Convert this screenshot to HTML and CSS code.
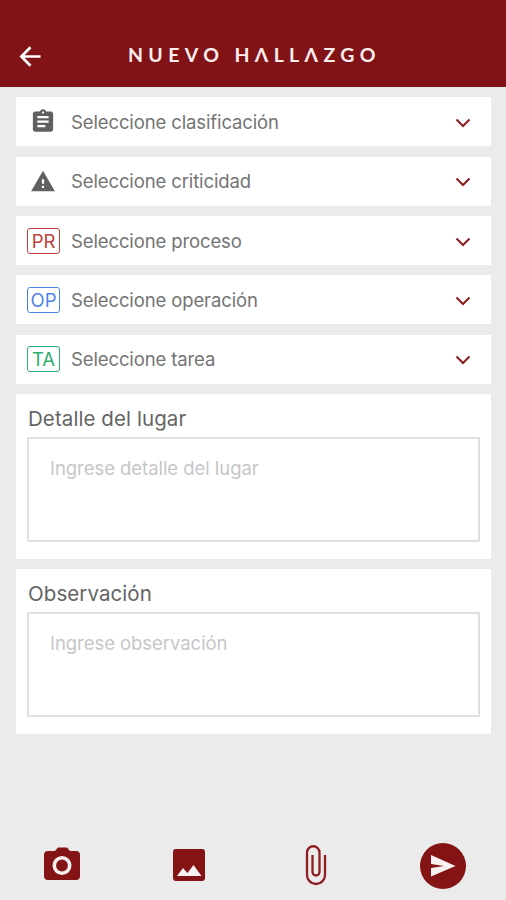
FILE: index.html
```html
<!DOCTYPE html>
<html lang="es">
<head>
<meta charset="utf-8">
<meta name="viewport" content="width=device-width, initial-scale=1">
<title>Nuevo hallazgo</title>
<link rel="stylesheet" href="styles.css">
</head>
<body>
<header class="bar">
  <svg class="back" viewBox="0 0 24 24"><path d="M22.500 12H3M12 2.300 2.500 12l9.500 9.700"/></svg>
  <h1 class="title">NUEVO HΛLLΛZGO</h1>
</header>
<main class="form">
  <div class="row">
    <span class="lead"><svg class="icon" viewBox="0 0 24 24"><path d="M19 3h-4.180C14.400 1.840 13.300 1 12 1s-2.400.84-2.820 2H5c-1.100 0-2 .9-2 2v14c0 1.100.9 2 2 2h14c1.100 0 2-.9 2-2V5c0-1.100-.9-2-2-2zm-7 0c.55 0 1 .45 1 1s-.45 1-1 1-1-.45-1-1 .45-1 1-1zm2 14H7v-2h7v2zm3-4H7v-2h10v2zm0-4H7V7h10v2z"/></svg></span>
    <span class="label">Seleccione clasificación</span>
    <svg class="chev" viewBox="0 0 16 10"><path d="M1.500 1.500 8 8l6.500-6.500"/></svg>
  </div>
  <div class="row">
    <span class="lead"><svg class="icon warn" viewBox="0 0 24 24"><path d="M1 21h22L12 2 1 21zm12-3h-2v-2h2v2zm0-4h-2v-4h2v4z"/></svg></span>
    <span class="label">Seleccione criticidad</span>
    <svg class="chev" viewBox="0 0 16 10"><path d="M1.500 1.500 8 8l6.500-6.500"/></svg>
  </div>
  <div class="row">
    <span class="lead"><span class="tag pr">PR</span></span>
    <span class="label">Seleccione proceso</span>
    <svg class="chev" viewBox="0 0 16 10"><path d="M1.500 1.500 8 8l6.500-6.500"/></svg>
  </div>
  <div class="row">
    <span class="lead"><span class="tag op">OP</span></span>
    <span class="label">Seleccione operación</span>
    <svg class="chev" viewBox="0 0 16 10"><path d="M1.500 1.500 8 8l6.500-6.500"/></svg>
  </div>
  <div class="row">
    <span class="lead"><span class="tag ta">TA</span></span>
    <span class="label">Seleccione tarea</span>
    <svg class="chev" viewBox="0 0 16 10"><path d="M1.500 1.500 8 8l6.500-6.500"/></svg>
  </div>
  <section class="card">
    <h2 class="heading">Detalle del lugar</h2>
    <div class="field">Ingrese detalle del lugar</div>
  </section>
  <section class="card">
    <h2 class="heading">Observación</h2>
    <div class="field">Ingrese observación</div>
  </section>
</main>
<footer class="actions">
  <div class="action"><svg class="camera" viewBox="0 0 36 33"><path class="fill" d="M4 4h7l3-3.500h9L26 4h6q4 0 4 4v21q0 4-4 4H4q-4 0-4-4V8q0-4 4-4z"/><circle class="lens" cx="18" cy="18.500" r="7.700"/></svg></div>
  <div class="action"><svg class="image" viewBox="0 0 32 32"><rect class="fill" width="32" height="32" rx="3"/><path class="cut" d="M4 27 10 19l4.500 5L20.500 16 28.500 27z"/></svg></div>
  <div class="action"><svg class="clip" viewBox="0 0 22 42"><path d="M7.500 11v17a3.500 3.500 0 0 0 7 0V8.500a6.250 6.250 0 0 0-12.500 0V31a9 9 0 0 0 18 0V11"/></svg></div>
  <div class="action"><svg class="send" viewBox="0 0 46 46"><circle class="fill" cx="23" cy="23" r="23"/><path class="cut" d="M11 12 35.500 23 11 33.500V25l13-2-13-2z"/></svg></div>
</footer>
</body>
</html>
```

FILE: styles.css
```css
* { box-sizing: border-box; }

body {
  margin: 0;
  height: 900px;
  display: flex;
  flex-direction: column;
  background: #ebebeb;
  font-family: Inter, "Liberation Sans", sans-serif;
}

.bar {
  height: 87px;
  display: flex;
  align-items: flex-end;
  padding: 0 0 19px 19px;
  background: #811316;
  color: #fbeeee;
}

.back {
  width: 23px;
  height: 23px;
  fill: none;
  stroke: #fff;
  stroke-width: 2.800;
}

.title {
  margin: 0 0 1px 86px;
  font: 700 19.5px/24px Lato, sans-serif;
  letter-spacing: 5.35px;
  white-space: nowrap;
}

.form {
  display: flex;
  flex-direction: column;
  gap: 10.4px;
  padding: 10.3px 15px 0 16px;
}

.row {
  height: 49px;
  display: flex;
  align-items: center;
  padding: 0 20px 0 11px;
  background: #fff;
}

.lead {
  width: 33px;
  margin-right: 11px;
  display: flex;
  justify-content: center;
}

.icon {
  width: 28px;
  height: 27px;
  margin-right: 1px;
  fill: #606060;
}

.warn { width: 26px; }

.tag {
  width: 33px;
  height: 26px;
  border: 1.500px solid;
  border-radius: 3px;
  font-size: 18.5px;
  line-height: 24px;
  text-align: center;
}

.pr { color: #c0403b; }
.op { color: #4f82e6; }
.ta { color: #2fac70; }

.label {
  flex: 1;
  color: #747474;
  font-size: 18.5px;
  letter-spacing: -0.12px;
  white-space: nowrap;
}

.chev {
  width: 16px;
  height: 10px;
  margin-top: 2px;
  fill: none;
  stroke: #8c1d22;
  stroke-width: 2;
}

.card {
  height: 164.5px;
  padding: 12px 11px 0;
  background: #fff;
}

.heading {
  margin: 0 0 6px 1px;
  color: #646464;
  font-size: 20.5px;
  font-weight: 400;
  letter-spacing: 0.08px;
  line-height: 25px;
}

.field {
  height: 105px;
  padding: 17px 21px;
  border: 2px solid #e0e0e0;
  border-radius: 1px;
  color: #c6c6c9;
  font-size: 18.5px;
  letter-spacing: -0.05px;
  line-height: 24px;
}

.actions {
  margin-top: auto;
  height: 70px;
  display: grid;
  grid-template-columns: repeat(4, 127px);
  margin-left: -1.5px;
  align-items: center;
}

.action {
  display: flex;
  justify-content: center;
}

.fill { fill: #841316; }
.cut { fill: #f8f2f2; }
.lens { fill: none; stroke: #f5eeee; stroke-width: 3.600; }

.camera { width: 36px; height: 33px; margin-bottom: 3px; }
.image { width: 32px; height: 32px; }
.clip { width: 22px; height: 42px; fill: none; stroke: #8c1d22; stroke-width: 2.300; }
.send { width: 46px; height: 46px; margin-top: 2px; }
```
